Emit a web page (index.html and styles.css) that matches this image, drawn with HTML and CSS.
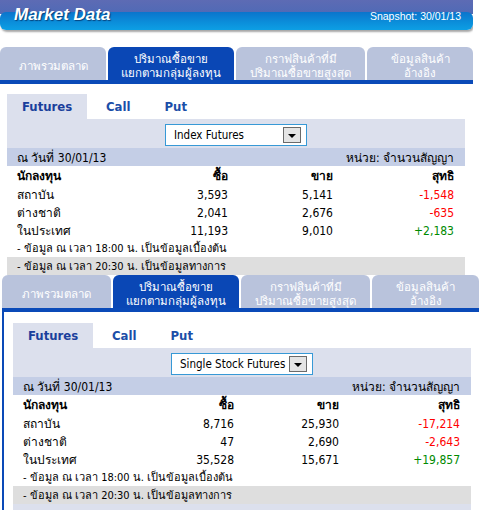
FILE: index.html
```html
<!DOCTYPE html>
<html lang="th">
<head>
    <meta charset="UTF-8">
    <title>Market Data</title>
    <link rel="stylesheet" href="styles.css">
</head>
<body>
    <!-- First snapshot: Index Futures -->
    <div class="widget cut">
        <div class="header">
            <span class="title">Market Data</span>
            <span class="snapshot">Snapshot: 30/01/13</span>
        </div>
        <div class="tabs">
            <div class="tab">ภาพรวมตลาด</div>
            <div class="tab active">ปริมาณซื้อขาย<br>แยกตามกลุ่มผู้ลงทุน</div>
            <div class="tab">กราฟสินค้าที่มี<br>ปริมาณซื้อขายสูงสุด</div>
            <div class="tab">ข้อมูลสินค้า<br>อ้างอิง</div>
        </div>
        <div class="panel">
            <div class="subtabs">
                <div class="subtab active">Futures</div>
                <div class="subtab">Call</div>
                <div class="subtab">Put</div>
            </div>
            <div class="filter">
                <div class="select">Index Futures<span class="drop"></span></div>
            </div>
            <div class="daterow">
                <span>ณ วันที่ 30/01/13</span>
                <span>หน่วย: จำนวนสัญญา</span>
            </div>
            <div class="grid head">
                <span>นักลงทุน</span><span>ซื้อ</span><span>ขาย</span><span>สุทธิ</span>
            </div>
            <div class="grid">
                <span>สถาบัน</span><span>3,593</span><span>5,141</span><span class="neg">-1,548</span>
            </div>
            <div class="grid">
                <span>ต่างชาติ</span><span>2,041</span><span>2,676</span><span class="neg">-635</span>
            </div>
            <div class="grid">
                <span>ในประเทศ</span><span>11,193</span><span>9,010</span><span class="pos">+2,183</span>
            </div>
            <div class="note">- ข้อมูล ณ เวลา 18:00 น. เป็นข้อมูลเบื้องต้น</div>
            <div class="note gray">- ข้อมูล ณ เวลา 20:30 น. เป็นข้อมูลทางการ</div>
            <div class="foot"></div>
        </div>
    </div>

    <!-- Second snapshot: Single Stock Futures -->
    <div class="widget alt">
        <div class="tabs">
            <div class="tab">ภาพรวมตลาด</div>
            <div class="tab active">ปริมาณซื้อขาย<br>แยกตามกลุ่มผู้ลงทุน</div>
            <div class="tab">กราฟสินค้าที่มี<br>ปริมาณซื้อขายสูงสุด</div>
            <div class="tab">ข้อมูลสินค้า<br>อ้างอิง</div>
        </div>
        <div class="panel">
            <div class="subtabs">
                <div class="subtab active">Futures</div>
                <div class="subtab">Call</div>
                <div class="subtab">Put</div>
            </div>
            <div class="filter">
                <div class="select">Single Stock Futures<span class="drop"></span></div>
            </div>
            <div class="daterow">
                <span>ณ วันที่ 30/01/13</span>
                <span>หน่วย: จำนวนสัญญา</span>
            </div>
            <div class="grid head">
                <span>นักลงทุน</span><span>ซื้อ</span><span>ขาย</span><span>สุทธิ</span>
            </div>
            <div class="grid">
                <span>สถาบัน</span><span>8,716</span><span>25,930</span><span class="neg">-17,214</span>
            </div>
            <div class="grid">
                <span>ต่างชาติ</span><span>47</span><span>2,690</span><span class="neg">-2,643</span>
            </div>
            <div class="grid">
                <span>ในประเทศ</span><span>35,528</span><span>15,671</span><span class="pos">+19,857</span>
            </div>
            <div class="note">- ข้อมูล ณ เวลา 18:00 น. เป็นข้อมูลเบื้องต้น</div>
            <div class="note gray">- ข้อมูล ณ เวลา 20:30 น. เป็นข้อมูลทางการ</div>
            <div class="foot"></div>
        </div>
    </div>
</body>
</html>
```

FILE: styles.css
```css
body {
    margin: 0;
    background: #fff;
    font-family: "DejaVu Sans Condensed", "DejaVu Sans", sans-serif;
    font-size: 12px;
    color: #000;
}

.widget {
    width: 473px;
}

.widget.cut {
    height: 275px;
    overflow: hidden;
}

.widget.alt {
    width: 477px;
    margin-left: 2px;
}

/* Header bar */
.header {
    position: relative;
    height: 31px;
    display: flex;
    justify-content: space-between;
    align-items: flex-start;
    padding: 0 12px 0 14px;
    background: linear-gradient(#5d6bb4, #4f6ab6) top / 100% 14px no-repeat;
}

.header::before {
    content: "";
    position: absolute;
    left: 0;
    right: 0;
    top: 12px;
    height: 18px;
    border-radius: 6px;
    background: linear-gradient(#0b74cc, #0b8fdb 60%, #0d9fe4);
    box-shadow: 1px 2px 2px rgba(0, 0, 0, 0.35);
}

.title {
    position: relative;
    margin-top: 5px;
    font-family: "Liberation Sans", Arial, sans-serif;
    font-size: 17px;
    font-weight: bold;
    font-style: italic;
    color: #fff;
    text-shadow: 1px 1px 1px rgba(0, 0, 40, 0.5);
}

.snapshot {
    position: relative;
    margin-top: 10px;
    font-family: "Liberation Sans", Arial, sans-serif;
    font-size: 10.5px;
    color: #fff;
}

/* Main tabs */
.tabs {
    display: grid;
    grid-template-columns: 106px 126px 129px 1fr;
    gap: 2px;
    margin-top: 16px;
}

.widget.alt .tabs {
    margin-top: 0;
    grid-template-columns: 109px 126px 129px 1fr;
}

.tab {
    height: 28px;
    padding-top: 5px;
    display: flex;
    align-items: center;
    justify-content: center;
    text-align: center;
    line-height: 14px;
    font-size: 11.5px;
    color: #fff;
    background: #b9c3dc;
    border-radius: 6px 6px 0 0;
}

.tab.active {
    background: #0a47b5;
}

/* Panel */
.panel {
    border-top: 4px solid #0a4ab8;
    padding: 10px 8px 0 7px;
}

.widget.alt .panel {
    border-left: 2px solid #0a4ab8;
    padding: 11px 8px 0 9px;
}

.subtabs {
    display: flex;
    height: 25px;
}

.subtab {
    display: flex;
    align-items: center;
    padding: 0 15px 0 19px;
    font-size: 13px;
    font-weight: bold;
    color: #1b4ea8;
}

.subtab.active {
    width: 80px;
    padding: 0 0 0 15px;
    box-sizing: border-box;
    background: #dce0ed;
    color: #1a3f9c;
}

.filter {
    display: flex;
    justify-content: center;
    padding: 5px 0 2px;
    background: #dce0ed;
}

.select {
    width: 142px;
    height: 22px;
    box-sizing: border-box;
    display: flex;
    align-items: center;
    justify-content: space-between;
    padding: 0 5px 0 8px;
    border: 1px solid #3799d6;
    background: #fff;
    font-size: 11.5px;
    white-space: nowrap;
}

.drop {
    position: relative;
    flex: none;
    width: 18px;
    height: 16px;
    box-sizing: border-box;
    border: 1px solid #6a6a6a;
    background: #e4e4e4;
}

.drop::after {
    content: "";
    position: absolute;
    left: 4px;
    top: 6px;
    border-left: 4px solid transparent;
    border-right: 4px solid transparent;
    border-top: 4px solid #000;
}

.daterow {
    display: flex;
    justify-content: space-between;
    align-items: center;
    height: 18px;
    padding: 0 11px 0 10px;
    background: #c4cee6;
}

.grid {
    display: grid;
    grid-template-columns: 131px 80px 105px 121px;
    align-items: center;
    height: 18px;
    padding: 0 11px 0 10px;
}

.grid span {
    text-align: right;
}

.grid span:first-child {
    text-align: left;
}

.grid.head {
    height: 19px;
    font-weight: bold;
}

.neg {
    color: #f00;
}

.pos {
    color: #008a00;
}

.note {
    display: flex;
    align-items: center;
    height: 18px;
    padding-left: 10px;
    font-size: 11px;
}

.note.gray {
    background: #dedede;
}

.foot {
    height: 6px;
    background: #dce0ed;
}
```
